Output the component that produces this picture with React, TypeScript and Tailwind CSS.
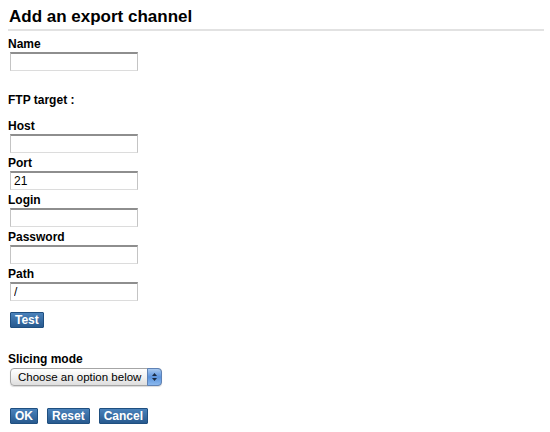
import React, { useState } from 'react';

const font = { fontFamily: '"Liberation Sans", Arial, Helvetica, sans-serif' };

const inputCls =
  'block ml-[2px] w-[128px] h-[19px] px-[3px] text-[12px] text-black bg-white border border-t-[#8e8e8e] border-x-[#c4c4c4] border-b-[#dcdcdc] border-t-2 outline-none';

const btnCls =
  'h-[16px] px-[4px] text-[12px] leading-[14px] font-bold text-white border border-[#1f4f80] bg-gradient-to-b from-[#4a82bb] to-[#285a8f] rounded-[1px]';

function Field({ label, value, onChange, type = 'text' }: { label: string; value: string; onChange: (v: string) => void; type?: string }) {
  return (
    <div className="mb-[3px]">
      <label className="block text-[12px] leading-[14px] font-bold text-black">{label}</label>
      <input type={type} value={value} onChange={(e) => onChange(e.target.value)} className={`${inputCls} mt-[1px]`} />
    </div>
  );
}

export default function App() {
  const [name, setName] = useState('');
  const [host, setHost] = useState('');
  const [port, setPort] = useState('21');
  const [login, setLogin] = useState('');
  const [password, setPassword] = useState('');
  const [path, setPath] = useState('/');
  const [mode, setMode] = useState('');

  return (
    <div className="w-[550px] h-[432px] bg-white px-[8px] pt-[7px]" style={font}>
      <h1 className="text-[17px] leading-[20px] font-bold text-black pl-[1px] pb-[2px] border-b-2 border-[#e2e2e2] w-[536px]">
        Add an export channel
      </h1>

      <div className="mt-[6px]">
        <label className="block text-[12px] leading-[14px] font-bold text-black">Name</label>
        <input value={name} onChange={(e) => setName(e.target.value)} className={`${inputCls} mt-[1px]`} />
      </div>

      <div className="mt-[22px] text-[12px] leading-[14px] font-bold text-black">FTP target :</div>

      <div className="mt-[12px]">
        <Field label="Host" value={host} onChange={setHost} />
        <Field label="Port" value={port} onChange={setPort} />
        <Field label="Login" value={login} onChange={setLogin} />
        <Field label="Password" value={password} onChange={setPassword} type="password" />
        <Field label="Path" value={path} onChange={setPath} />
      </div>

      <div className="mt-[11px] ml-[2px] flex">
        <button className={btnCls}>Test</button>
      </div>

      <div className="mt-[24px]">
        <label className="block text-[12px] leading-[14px] font-bold text-black">Slicing mode</label>
        <div className="relative ml-[2px] mt-[2px] w-[152px] h-[18px]">
          <select
            value={mode}
            onChange={(e) => setMode(e.target.value)}
            className="block appearance-none w-full h-[18px] py-0 pl-[7px] pr-[16px] text-[11.5px] leading-[16px] text-black rounded-[4px] border border-[#a5a5a5] bg-gradient-to-b from-white via-[#f1f1f1] to-[#dedede] shadow-[0_1px_1px_rgba(0,0,0,0.15)] outline-none"
          >
            <option value="">Choose an option below</option>
            <option value="daily">Daily</option>
            <option value="weekly">Weekly</option>
          </select>
          <div className="pointer-events-none absolute right-0 top-0 h-[18px] w-[15px] rounded-r-[4px] border border-[#5f82b5] bg-gradient-to-b from-[#a8c8ef] via-[#5b93dc] to-[#8ab8ee] flex flex-col items-center justify-center gap-[2px]">
            <svg width="5" height="3" viewBox="0 0 5 3"><path d="M0 3 L2.5 0 L5 3 Z" fill="#1b2b44" /></svg>
            <svg width="5" height="3" viewBox="0 0 5 3"><path d="M0 0 L2.5 3 L5 0 Z" fill="#1b2b44" /></svg>
          </div>
        </div>
      </div>

      <div className="mt-[22px] ml-[2px] flex gap-[9px]">
        <button className={btnCls}>OK</button>
        <button className={btnCls}>Reset</button>
        <button className={btnCls}>Cancel</button>
      </div>
    </div>
  );
}
